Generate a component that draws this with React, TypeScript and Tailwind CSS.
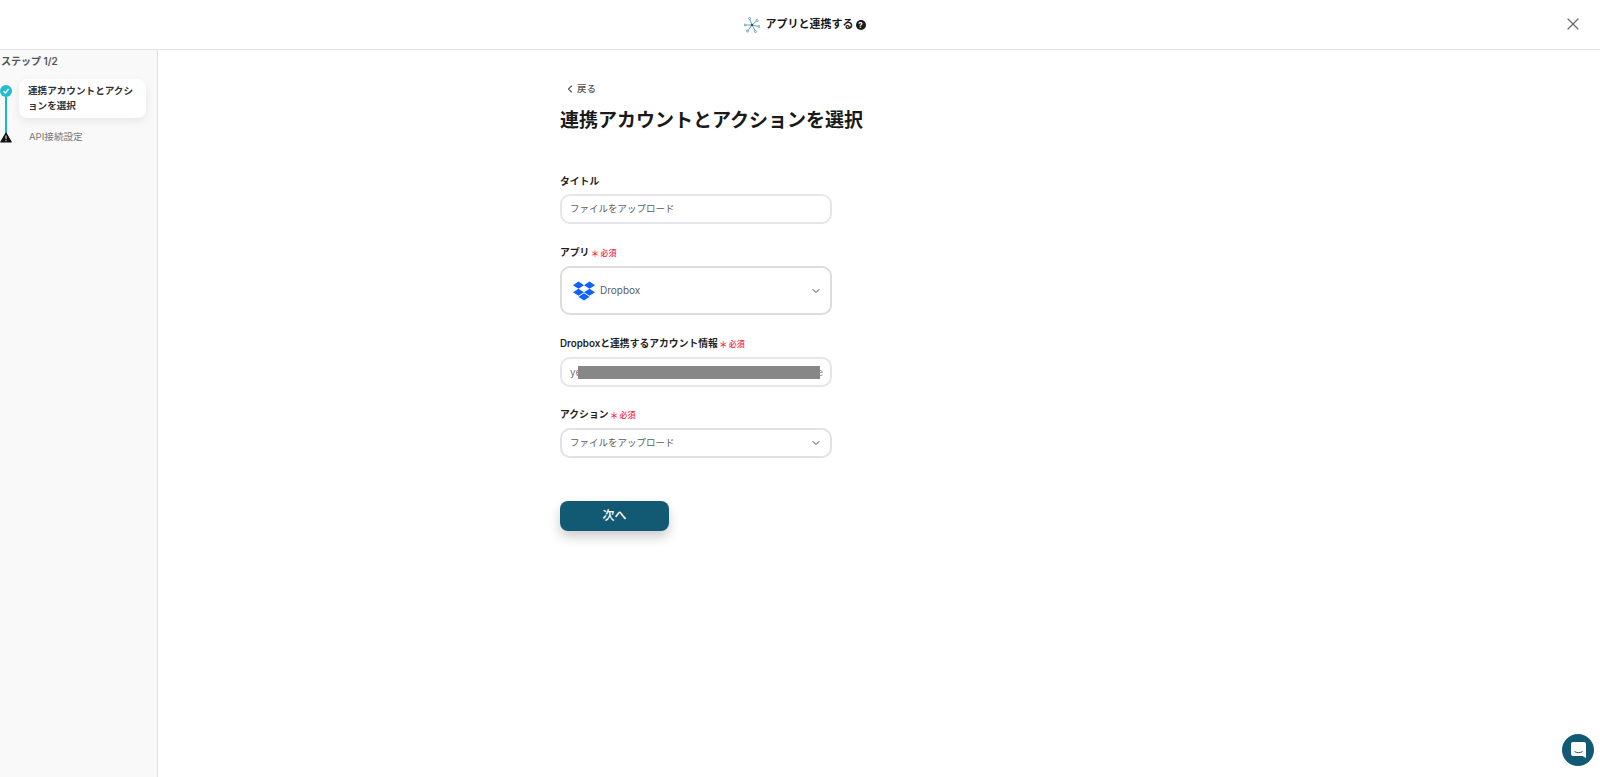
import { ChevronDown, ChevronLeft, X } from "lucide-react";

const font = { fontFamily: '"Inter", "Noto Sans CJK JP", sans-serif' };

function Required() {
  return (
    <span className="inline-flex items-center text-[8px] font-medium leading-none text-[#f0243c]">
      <span className="mr-[1px] text-[9px] leading-none">＊</span>必須
    </span>
  );
}

function Label({ children, required }: { children: React.ReactNode; required?: boolean }) {
  return (
    <div className="flex h-[14px] items-center gap-[1px] text-[9.8px] font-semibold leading-[14px] text-[#1f1f1f]">
      {children}
      {required && <Required />}
    </div>
  );
}

function Field({ children, className }: { children: React.ReactNode; className: string }) {
  return (
    <div className={`mt-[6px] flex w-[272px] items-center rounded-[10px] border-2 bg-white text-[9.5px] text-[#5c5c5c] ${className}`}>
      {children}
    </div>
  );
}

function DropboxLogo() {
  return (
    <svg width="22" height="20" viewBox="0 0 42 38" fill="#0f62fe">
      <path d="M10.5 1 0 7.8l10.5 6.7L21 7.8z" />
      <path d="M31.5 1 21 7.8l10.5 6.7L42 7.8z" />
      <path d="M0 21.2 10.5 28 21 21.2l-10.5-6.7z" />
      <path d="M31.5 14.5 21 21.2 31.5 28 42 21.2z" />
      <path d="M10.5 30.2 21 37l10.5-6.8L21 23.5z" />
    </svg>
  );
}

function AppLogo() {
  return (
    <svg width="16" height="16" viewBox="0 0 16 16" fill="none" stroke="#6fa3ba" strokeWidth="1">
      <path d="M8 8 5.5 1.5M8 8l5-4.5M8 8H1M8 8l7 1.5M8 8l-4.5 6M8 8l3.5 6.5" />
      <circle cx="5.5" cy="1.5" r="1" fill="#fff" />
      <circle cx="13" cy="3.5" r="1" fill="#fff" />
      <circle cx="1" cy="8" r="1" fill="#fff" />
      <circle cx="15" cy="9.5" r="1" fill="#fff" />
      <circle cx="3.5" cy="14" r="1" fill="#fff" />
      <circle cx="11.5" cy="14.5" r="1" fill="#fff" />
      <circle cx="8" cy="8" r="1.2" fill="#15596f" stroke="none" />
    </svg>
  );
}

export default function App() {
  return (
    <div style={font} className="relative flex h-[777px] w-[1600px] flex-col overflow-hidden bg-white">
      <header className="flex h-[50px] shrink-0 items-center justify-center border-b border-[#e2e2e2] bg-white pl-[9px]">
        <div className="flex items-center text-[11px] font-semibold text-[#1a1a1a]">
          <AppLogo />
          <span className="ml-[6px]">アプリと連携する</span>
          <span className="ml-[2px] flex h-[10px] w-[10px] items-center justify-center rounded-full bg-[#1a1a1a] text-[8px] font-bold leading-none text-white">?</span>
        </div>
        <X className="absolute right-[17px] top-[14px] text-[#6b6b6b]" size={20} strokeWidth={1.5} />
      </header>
      <div className="flex min-h-0 flex-1">
        <aside className="w-[158px] shrink-0 border-r border-[#dedede] bg-[#f9f9f9]">
          <div className="pl-[1px] pt-[5px] text-[10px] font-semibold leading-[12px] text-[#555]">ステップ 1/2</div>
          <div className="mt-[12px] flex">
            <div className="flex w-[12px] flex-col items-center pt-[6px]">
              <div className="flex h-[12px] w-[12px] shrink-0 items-center justify-center rounded-full bg-[#22bcd0]">
                <svg width="8" height="8" viewBox="0 0 8 8" fill="none" stroke="#fff" strokeWidth="1.4"><path d="M1.5 4.2 3.4 6 6.6 2" /></svg>
              </div>
              <div className="h-[36px] w-[2px] bg-[#12bccb]" />
              <svg className="-mt-[1px] shrink-0" width="12" height="11" viewBox="0 0 12 11">
                <path d="M6 1 11.2 10H.8z" fill="#111" stroke="#111" strokeWidth="1.2" strokeLinejoin="round" />
                <path d="M6 3.5v3.5M6 8v1.2" stroke="#fff" strokeWidth="1" />
              </svg>
            </div>
            <div className="ml-[7px] flex-1">
              <div className="w-[127px] rounded-[8px] bg-white py-[5px] pl-[9px] pr-[8px] text-[9.6px] font-semibold leading-[14.5px] text-[#333] shadow-[0_3px_10px_rgba(0,0,0,0.08)]">
                連携アカウントとアクションを選択
              </div>
              <div className="mt-[12px] pl-[10px] text-[9.6px] leading-[14px] text-[#777]">API接続設定</div>
            </div>
          </div>
        </aside>
        <main className="min-w-0 flex-1 pl-[402px]">
          <div className="mt-[32px] flex h-[14px] items-center pl-[4px] text-[9.5px] font-medium text-[#555]">
            <ChevronLeft size={12} strokeWidth={2.2} />
            <span className="ml-[1px]">戻る</span>
          </div>
          <h1 className="mt-[11px] text-[19px] font-semibold leading-[28px] text-[#1a1a1a]">連携アカウントとアクションを選択</h1>
          <div className="mt-[40px]"><Label>タイトル</Label></div>
          <Field className="!mt-[5px] h-[30px] border-[#e4e6ea] px-[8px]">ファイルをアップロード</Field>
          <div className="mt-[22px]"><Label required>アプリ</Label></div>
          <Field className="h-[49px] border-[#dcdcde] pl-[11px] pr-[8px]">
            <DropboxLogo />
            <span className="ml-[5px] flex-1 text-[10px]">Dropbox</span>
            <ChevronDown size={12} strokeWidth={2} className="text-[#444]" />
          </Field>
          <div className="mt-[22px]"><Label required>Dropboxと連携するアカウント情報</Label></div>
          <Field className="relative h-[30px] justify-between border-[#e4e6ea] pl-[8px] pr-[7px]">
            <span className="text-[10px] text-[#777]">ye</span>
            <span className="text-[10px] text-[#999]">e</span>
            <span className="absolute left-[16px] top-[7px] h-[13px] w-[242px] bg-[#878787]" />
          </Field>
          <div className="mt-[21px]"><Label required>アクション</Label></div>
          <Field className="h-[30px] border-[#e0e2e8] pl-[8px] pr-[8px]">
            <span className="flex-1">ファイルをアップロード</span>
            <ChevronDown size={12} strokeWidth={2} className="text-[#444]" />
          </Field>
          <button className="mt-[43px] flex h-[30px] w-[109px] items-center justify-center rounded-[8px] bg-[#125a73] text-[12px] font-medium text-white shadow-[0_6px_12px_rgba(0,0,0,0.2)]">
            次へ
          </button>
        </main>
      </div>
      <div className="absolute bottom-[11px] right-[6px] flex h-[32px] w-[32px] items-center justify-center rounded-full bg-[#125a73]">
        <svg width="15" height="16" viewBox="0 0 15 16">
          <path d="M2 0h11a2 2 0 0 1 2 2v14l-3.5-2H2a2 2 0 0 1-2-2V2a2 2 0 0 1 2-2z" fill="#fff" />
          <path d="M3.5 9.5c2.5 1.6 5.5 1.6 8 0" stroke="#125a73" fill="none" strokeWidth="1" />
        </svg>
      </div>
    </div>
  );
}
